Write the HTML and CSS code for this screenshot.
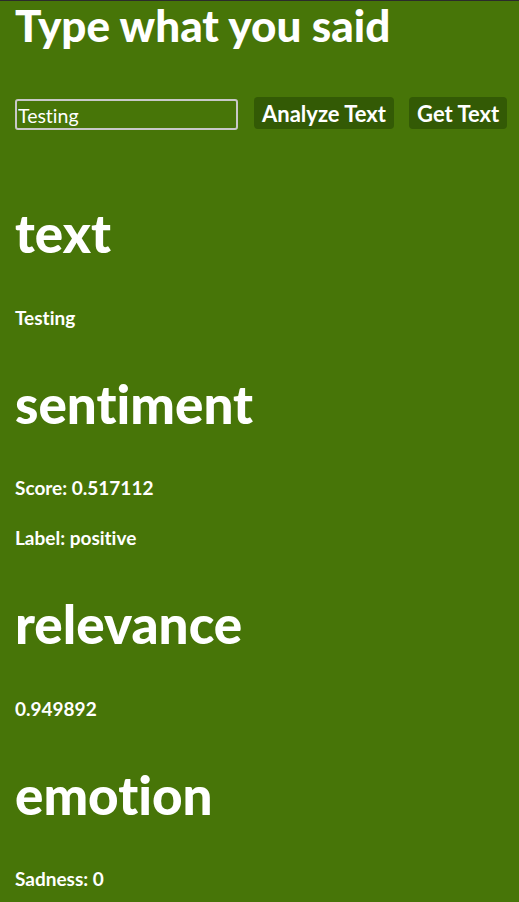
FILE: index.html
```html
<!DOCTYPE html>
<html>
<head>
<meta charset="utf-8">
<link rel="stylesheet" href="styles.css">
</head>
<body>
<div class="page">
  <h1 class="title">Type what you said</h1>
  <div class="controls">
    <input class="field" type="text" value="Testing">
    <button class="btn">Analyze Text</button>
    <button class="btn">Get Text</button>
  </div>
  <section class="block">
    <h2 class="heading">text</h2>
    <p class="value">Testing</p>
  </section>
  <section class="block">
    <h2 class="heading">sentiment</h2>
    <p class="value">Score: 0.517112</p>
    <p class="value">Label: positive</p>
  </section>
  <section class="block">
    <h2 class="heading">relevance</h2>
    <p class="value">0.949892</p>
  </section>
  <section class="block">
    <h2 class="heading">emotion</h2>
    <p class="value">Sadness: 0</p>
  </section>
</div>
</body>
</html>
```
FILE: styles.css
```css
html {
  background: #477508;
  border-top: 1px solid #2b2b2b;
}
body {
  margin: 0;
  color: #ffffff;
  font-family: "Lato", "Noto Sans", sans-serif;
  font-variant-ligatures: none;
}
.page {
  padding: 0 15px;
}
.title {
  font-family: "Lato", sans-serif;
  font-weight: 900;
  font-size: 44px;
  line-height: 48px;
  margin: 0;
}
.controls {
  display: flex;
  align-items: flex-start;
  margin-top: 48px;
}
.field {
  flex-shrink: 0;
  width: 223px;
  height: 31px;
  margin-top: 2px;
  box-sizing: border-box;
  background: transparent;
  border: 2px solid #c8c8c8;
  border-radius: 3px;
  color: #fff;
  font-family: "Lato", sans-serif;
  font-size: 19.5px;
  padding: 2px 0 0 1px;
  outline: none;
  font-variant-ligatures: none;
}
.btn {
  flex-shrink: 0;
  white-space: nowrap;
  background: #335a05;
  border: none;
  border-radius: 4px;
  color: #fff;
  font-family: "Lato", sans-serif;
  font-weight: 700;
  font-size: 22px;
  height: 32px;
  padding: 0 8px;
  margin-left: 16px;
  font-variant-ligatures: none;
}
.btn + .btn {
  margin-left: 15px;
}
.heading {
  font-family: "Lato", sans-serif;
  font-weight: 900;
  font-size: 53px;
  line-height: 1.2;
  margin: 38px 0 0;
}
.controls + .block .heading {
  margin-top: 71px;
}
.value {
  font-weight: 700;
  font-size: 19px;
  line-height: 32px;
  margin: 18px 0 0;
}
.heading + .value {
  margin-top: 37px;
}
```
